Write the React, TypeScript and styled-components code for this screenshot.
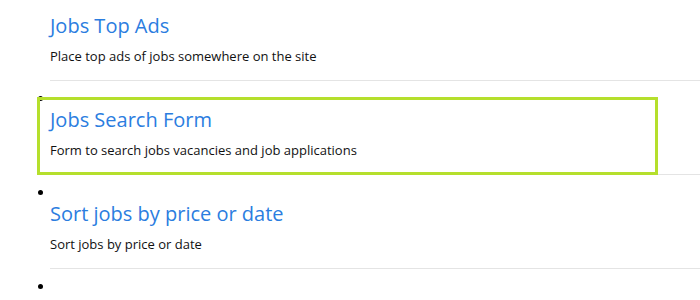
import React from 'react';
import styled, { createGlobalStyle } from 'styled-components';

const GlobalStyle = createGlobalStyle`
  html, body {
    margin: 0;
    padding: 0;
    background: #fff;
    overflow: hidden;
  }
  body {
    font-family: "Open Sans", "Liberation Sans", sans-serif;
    color: #111;
  }
`;

// the list is scrolled a little, so the first entry's bullet sits above the frame
const List = styled.ul`
  list-style: none;
  margin: -33px 0 0 0;
  padding: 0 0 0 50px;
`;

const Item = styled.li<{ $active?: boolean }>`
  position: relative;
  min-height: 20px;
  padding: 25px 0 14px 0;
  border-bottom: 1px solid #e4e4e4;

  &:first-child {
    padding-top: 45px;
  }

  &::before {
    content: '';
    position: absolute;
    left: -12.5px;
    top: 14.5px;
    width: 5px;
    height: 5px;
    border-radius: 50%;
    background: #000;
  }

  ${({ $active }) =>
    $active &&
    `
    &::after {
      content: '';
      position: absolute;
      left: -13px;
      top: 16px;
      width: 621px;
      height: 78px;
      box-sizing: border-box;
      border: 3px solid #b5df2c;
      pointer-events: none;
    }
  `}
`;

const Title = styled.a`
  display: block;
  font-size: 20px;
  line-height: 28px;
  color: #2b7ddf;
  text-decoration: none;
  cursor: pointer;
`;

const Desc = styled.p`
  margin: 6px 0 0 0;
  font-size: 13px;
  line-height: 20px;
  color: #111;
`;

const items = [
  { title: 'Jobs Top Ads', desc: 'Place top ads of jobs somewhere on the site' },
  { title: 'Jobs Search Form', desc: 'Form to search jobs vacancies and job applications', active: true },
  { title: 'Sort jobs by price or date', desc: 'Sort jobs by price or date' },
];

export default function App() {
  return (
    <>
      <GlobalStyle />
      <List>
        {items.map((it) => (
          <Item key={it.title} $active={it.active}>
            <Title>{it.title}</Title>
            <Desc>{it.desc}</Desc>
          </Item>
        ))}
        <Item />
      </List>
    </>
  );
}
